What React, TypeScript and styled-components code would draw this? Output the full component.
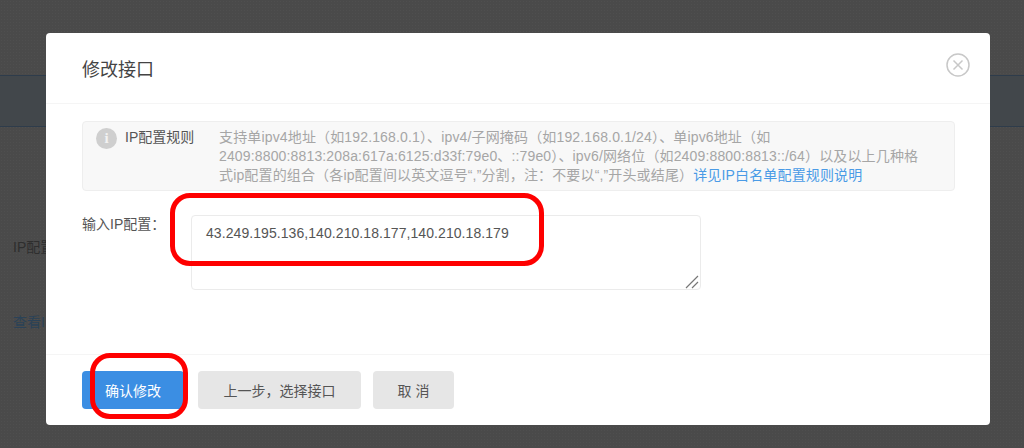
import React from "react";
import styled, { createGlobalStyle } from "styled-components";

const GlobalStyle = createGlobalStyle`
  html, body {
    margin: 0;
    height: 100%;
    overflow: hidden;
    background: #4a4a4a;
    font-family: "Liberation Sans", "Noto Sans CJK SC", sans-serif;
  }
  * {
    box-sizing: border-box;
  }
`;

const Page = styled.div`
  position: relative;
  width: 1024px;
  height: 448px;
  padding-top: 75px;
  overflow: hidden;
  background-color: #4a4a4a;
  background-image: radial-gradient(#4f4f4f 0.6px, transparent 0.7px);
  background-size: 3px 3px;
`;

const Band = styled.div`
  height: 52px;
  background: #42474b;
  border-top: 1px solid #2e3c4b;
  border-bottom: 1px solid #2e3c4b;
`;

const BehindRow = styled.div<{ $top: number; $link?: boolean }>`
  margin-top: ${(p) => p.$top}px;
  padding-left: 13px;
  font-size: 14px;
  line-height: 18px;
  color: ${(p) => (p.$link ? "#2b4257" : "#2e2e2e")};
`;

const Dialog = styled.div`
  position: absolute;
  left: 46px;
  top: 33px;
  width: 944px;
  height: 392px;
  display: flex;
  flex-direction: column;
  background: #fff;
  border-radius: 4px;
`;

const Header = styled.div`
  height: 71px;
  flex: none;
  display: flex;
  align-items: center;
  justify-content: space-between;
  padding: 0 20px 0 36px;
  border-bottom: 1px solid #f5f5f5;
`;

const Title = styled.h3`
  margin: 0 0 1px;
  font-size: 18px;
  font-weight: 400;
  color: #444;
`;

const CloseIcon = styled.svg`
  width: 24px;
  height: 24px;
  margin-bottom: 6px;
  display: block;
  fill: none;
  stroke: #c8c8c8;
`;

const Body = styled.div`
  flex: 1;
  padding: 17px 35px 0 36px;
`;

const Notice = styled.div`
  height: 70px;
  display: flex;
  padding: 6px 15px 0 13px;
  background: #f8f8f8;
  border: 1px solid #eeeeee;
  border-radius: 4px;
`;

const InfoIcon = styled.span`
  flex: none;
  width: 21px;
  height: 21px;
  border-radius: 50%;
  background: #cfcfcf;
  color: #f2f2f2;
  font-family: "Liberation Serif", serif;
  font-size: 15px;
  font-weight: 700;
  line-height: 21px;
  text-align: center;
`;

const NoticeLabel = styled.span`
  flex: none;
  width: 94px;
  margin-left: 8px;
  font-size: 14px;
  line-height: 19px;
  color: #555;
`;

const NoticeText = styled.p`
  margin: 0;
  width: 704px;
  font-size: 14px;
  line-height: 19px;
  letter-spacing: 0.15px;
  color: #a6a6a6;
`;

const NoticeLink = styled.a`
  color: #4a9be6;
  text-decoration: none;
`;

const Field = styled.div`
  position: relative;
  display: flex;
  margin-top: 24px;
`;

const FieldLabel = styled.label`
  width: 109px;
  flex: none;
  font-size: 14px;
  line-height: 18px;
  color: #555;
`;

const IpInput = styled.textarea`
  width: 510px;
  height: 75px;
  padding: 8px 14px;
  margin: 0;
  display: block;
  border: 1px solid #ebebeb;
  border-radius: 4px;
  outline: none;
  resize: none;
  font-family: inherit;
  font-size: 14px;
  line-height: 18px;
  letter-spacing: 0.07px;
  color: #555;
  background: #fff;
`;

const ResizeGrip = styled.svg`
  position: absolute;
  left: 603px;
  top: 60px;
  width: 14px;
  height: 14px;
  fill: none;
  stroke: #777;
  stroke-width: 1.2;
`;

const Footer = styled.div`
  position: relative;
  flex: none;
  height: 71px;
  display: flex;
  gap: 12px;
  padding: 16px 0 0 36px;
  border-top: 1px solid #f5f5f5;
`;

const Button = styled.button<{ $primary?: boolean; $width: number }>`
  width: ${(p) => p.$width}px;
  height: 38px;
  padding: 0;
  margin-right: ${(p) => (p.$primary ? 2 : 0)}px;
  border: none;
  border-radius: 4px;
  font-family: inherit;
  font-size: 14px;
  color: ${(p) => (p.$primary ? "#fff" : "#555")};
  background: ${(p) => (p.$primary ? "#3b8ee3" : "#e6e6e6")};
`;

const RedMark = styled.div<{ $left: number; $top: number; $width: number; $height: number; $radius: number }>`
  position: absolute;
  left: ${(p) => p.$left}px;
  top: ${(p) => p.$top}px;
  width: ${(p) => p.$width}px;
  height: ${(p) => p.$height}px;
  border: 5px solid #fe0000;
  border-radius: ${(p) => p.$radius}px;
  pointer-events: none;
`;

export default function App() {
  return (
    <Page>
      <GlobalStyle />
      <Band />
      <BehindRow $top={111}>IP配置</BehindRow>
      <BehindRow $top={57} $link>
        查看IP
      </BehindRow>

      <Dialog>
        <Header>
          <Title>修改接口</Title>
          <CloseIcon viewBox="0 0 24 24">
            <circle cx="12" cy="12" r="11" strokeWidth="1.5" />
            <path d="M7.5 7.5l9 9M16.5 7.5l-9 9" strokeWidth="1.5" />
          </CloseIcon>
        </Header>
        <Body>
          <Notice>
            <InfoIcon>i</InfoIcon>
            <NoticeLabel>IP配置规则</NoticeLabel>
            <NoticeText>
              支持单ipv4地址（如192.168.0.1）、ipv4/子网掩码（如192.168.0.1/24）、单ipv6地址（如
              2409:8800:8813:208a:617a:6125:d33f:79e0、::79e0）、ipv6/网络位（如2409:8800:8813::/64）以及以上几种格式ip配置的组合（各ip配置间以英文逗号“,”分割，注：不要以“,”开头或结尾）
              <NoticeLink>详见IP白名单配置规则说明</NoticeLink>
            </NoticeText>
          </Notice>
          <Field>
            <FieldLabel>输入IP配置：</FieldLabel>
            <IpInput defaultValue="43.249.195.136,140.210.18.177,140.210.18.179" />
            <ResizeGrip viewBox="0 0 14 14">
              <path d="M1 13L13 1M7 13l6-6" />
            </ResizeGrip>
            <RedMark $left={88} $top={-22} $width={374} $height={73} $radius={20} />
          </Field>
        </Body>
        <Footer>
          <Button $primary $width={102}>
            确认修改
          </Button>
          <Button $width={163}>上一步，选择接口</Button>
          <Button $width={81}>取 消</Button>
          <RedMark $left={44} $top={-2} $width={98} $height={66} $radius={20} />
        </Footer>
      </Dialog>
    </Page>
  );
}
